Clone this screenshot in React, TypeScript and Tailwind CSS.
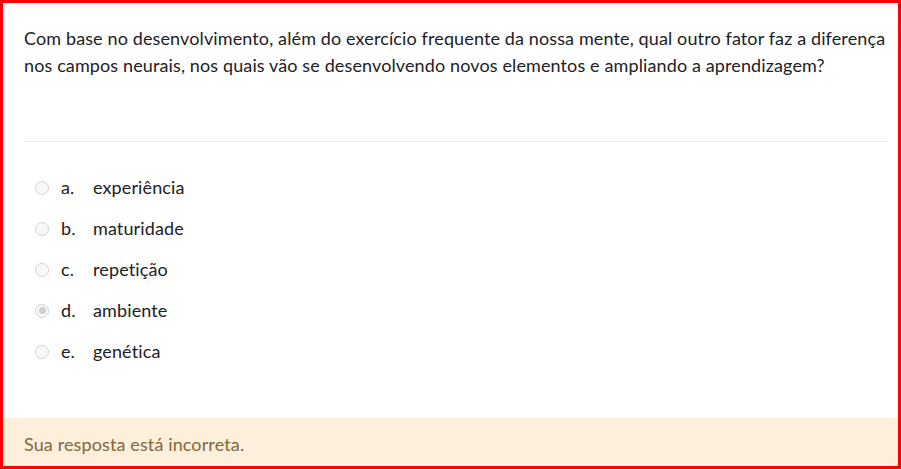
const options = [
  { letter: "a.", text: "experiência", checked: false },
  { letter: "b.", text: "maturidade", checked: false },
  { letter: "c.", text: "repetição", checked: false },
  { letter: "d.", text: "ambiente", checked: true },
  { letter: "e.", text: "genética", checked: false },
];

function Radio({ checked }: { checked: boolean }) {
  return (
    <span className="flex h-[14px] w-[14px] shrink-0 items-center justify-center rounded-full border border-[#d4d4d4] bg-[#f8f8f8]">
      {checked && <span className="h-[7px] w-[7px] rounded-full bg-[#cfcfcf]" />}
    </span>
  );
}

export default function App() {
  return (
    <div className="flex h-[469px] w-[901px] flex-col border-[3px] border-[#ff0000] bg-white font-['Lato',sans-serif] text-[18px] tracking-[0.12px] text-[#1d2125]">
      <div className="pl-[21px] pr-[10px] pt-[22px]">
        <p className="leading-[27px]">
          Com base no desenvolvimento, além do exercício frequente da nossa mente, qual outro fator faz a diferença nos
          campos neurais, nos quais vão se desenvolvendo novos elementos e ampliando a aprendizagem?
        </p>
        <div className="mt-[62px] h-px bg-[#e8e8e8]" />
        <div className="mt-[25px] flex flex-col">
          {options.map((o) => (
            <div key={o.letter} className="flex h-[41px] items-center pl-[11px]">
              <Radio checked={o.checked} />
              <span className="ml-[12px] w-[32px]">{o.letter}</span>
              <span>{o.text}</span>
            </div>
          ))}
        </div>
      </div>
      <div className="mt-auto flex h-[48px] items-center bg-[#fcefdc] pl-[21px] pt-[5px] text-[#86663c]">
        Sua resposta está incorreta.
      </div>
    </div>
  );
}
